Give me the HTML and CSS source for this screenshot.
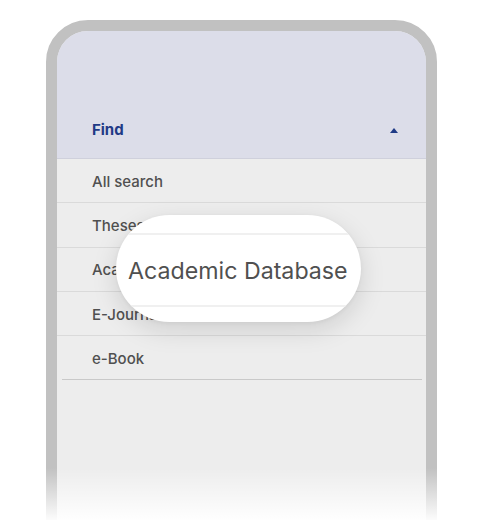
FILE: index.html
```html
<!DOCTYPE html>
<html>
<head>
<meta charset="utf-8">
<link rel="stylesheet" href="styles.css">
</head>
<body>
<div class="stage">
  <div class="phone">
    <div class="screen">
      <div class="header">
        <span class="find">Find</span>
        <svg class="caret" width="8" height="5" viewBox="0 0 8 5"><path d="M4 0L8 5H0Z" fill="#1f3a86"/></svg>
      </div>
      <ul class="list">
        <li class="row">All search</li>
        <li class="row">Theses</li>
        <li class="row">Academic Database</li>
        <li class="row">E-Journal</li>
        <li class="row last">e-Book</li>
      </ul>
    </div>
  </div>
  <div class="lens">
    <span class="lens-line top"></span>
    <span class="lens-text">Academic Database</span>
    <span class="lens-line bottom"></span>
  </div>
  <div class="fade"></div>
</div>
</body>
</html>
```
FILE: styles.css
```css
* { box-sizing: border-box; }
html, body { margin: 0; padding: 0; background: #fff; }
body { font-family: Inter, "Noto Sans", sans-serif; }
.stage {
  position: relative;
  width: 484px;
  height: 520px;
  overflow: hidden;
  padding: 20px 0 0 46px;
}
.phone {
  width: 391px;
  height: 560px;
  border: 11px solid #c1c1c1;
  border-radius: 42px 42px 0 0;
  background: #c1c1c1;
}
.screen {
  height: 100%;
  background: #ededed;
  border-radius: 31px 31px 0 0;
  overflow: hidden;
}
.header {
  height: 128px;
  background: #dcdde9;
  border-bottom: 1px solid #cfd0dc;
  display: flex;
  align-items: flex-end;
  justify-content: space-between;
  padding: 0 28px 19px 35px;
}
.find {
  font-size: 15px;
  font-weight: 700;
  color: #1f3a86;
  line-height: 18px;
}
.caret { margin-bottom: 6px; }
.list { list-style: none; margin: 0; padding: 0; }
.row {
  height: 44.3px;
  display: flex;
  align-items: center;
  padding: 1px 0 0 35px;
  font-size: 15px;
  font-weight: 500;
  color: #505050;
  border-bottom: 1px solid #dadada;
}
.row.last {
  border-bottom: none;
  box-shadow: inset 0 -1px 0 #c9c9c9;
  margin: 0 4px 0 5px;
  padding-left: 30px;
}
.lens {
  position: absolute;
  left: 116px;
  top: 215px;
  width: 245px;
  height: 107px;
  border-radius: 54px;
  background: #fff;
  box-shadow: 0 8px 26px rgba(0,0,0,0.13), 0 1px 4px rgba(0,0,0,0.05);
  overflow: hidden;
  display: flex;
  align-items: center;
  padding: 4px 0 0 12px;
}
.lens-line {
  position: absolute;
  left: 0;
  right: 0;
  height: 1.5px;
  background: #f0f0f0;
}
.lens-line.top { top: 18px; }
.lens-line.bottom { top: 90px; }
.lens-text {
  font-size: 23.2px;
  font-weight: 400;
  color: #505050;
}
.fade {
  position: absolute;
  left: 0;
  right: 0;
  bottom: 0;
  height: 52px;
  background: linear-gradient(to bottom, rgba(255,255,255,0), rgba(255,255,255,0.95));
}
```
